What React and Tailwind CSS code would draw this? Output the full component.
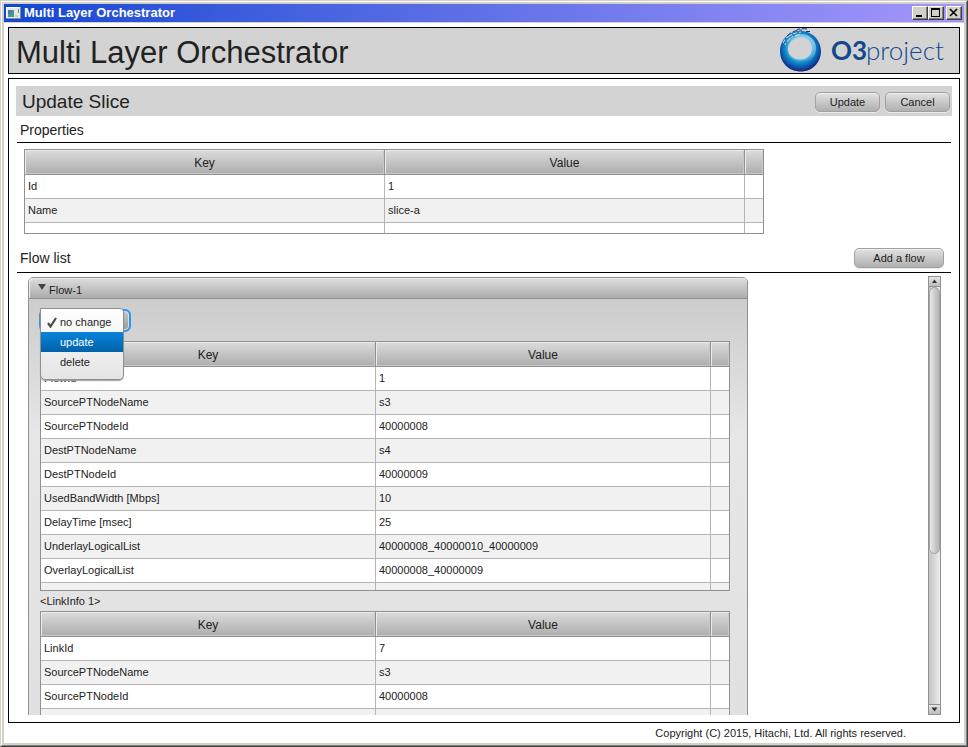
import React from "react";

const properties = [
  ["Id", "1"],
  ["Name", "slice-a"],
];

const flowRows = [
  ["FlowId", "1"],
  ["SourcePTNodeName", "s3"],
  ["SourcePTNodeId", "40000008"],
  ["DestPTNodeName", "s4"],
  ["DestPTNodeId", "40000009"],
  ["UsedBandWidth [Mbps]", "10"],
  ["DelayTime [msec]", "25"],
  ["UnderlayLogicalList", "40000008_40000010_40000009"],
  ["OverlayLogicalList", "40000008_40000009"],
];

const linkRows = [
  ["LinkId", "7"],
  ["SourcePTNodeName", "s3"],
  ["SourcePTNodeId", "40000008"],
];

const headCell =
  "h-[25px] border-b border-[#919191] bg-linear-to-b from-[#dcdcdc] to-[#adadad] px-0 pt-[2px] pb-0 text-center text-xs font-normal shadow-[inset_1px_1px_0_#ececec,inset_-1px_-1px_0_#c8c8c8]";

const bodyCell = "h-6 border-b border-[#b5b5b5] px-[3px] pt-0 pb-[2px]";

function KeyValueTable({ label, rows, fillerClass }) {
  return (
    <div className="border border-[#919191]">
      <table
        aria-label={label}
        className="w-full table-fixed border-separate border-spacing-0 text-[11px] leading-4"
      >
        <colgroup>
          <col />
          <col />
          <col className="w-[18px]" />
        </colgroup>
        <thead>
          <tr>
            <th className={headCell + " border-r"}>Key</th>
            <th className={headCell + " border-r"}>Value</th>
            <th className={headCell} aria-hidden="true"></th>
          </tr>
        </thead>
        <tbody>
          {rows.map(([key, value]) => (
            <tr key={key} className="bg-white even:bg-[#f1f1f1]">
              <td className={bodyCell + " border-r"}>{key}</td>
              <td className={bodyCell + " border-r"}>{value}</td>
              <td className={bodyCell}></td>
            </tr>
          ))}
          <tr className="bg-white even:bg-[#f1f1f1]" aria-hidden="true">
            <td className={fillerClass + " border-r border-[#b5b5b5] p-0"}></td>
            <td className={fillerClass + " border-r border-[#b5b5b5] p-0"}></td>
            <td className={fillerClass + " p-0"}></td>
          </tr>
        </tbody>
      </table>
    </div>
  );
}

function PushButton({ children, className }) {
  return (
    <button
      type="button"
      className={
        "h-5 rounded-[5px] border border-[#a0a0a0] bg-linear-to-b from-[#e2e2e2] to-[#b0b0b0] text-[11px] leading-4 shadow-[inset_0_1px_0_#f0f0f0,0_1px_0_#ececec] " +
        className
      }
    >
      {children}
    </button>
  );
}

function WindowButton({ label, children }) {
  return (
    <button
      type="button"
      aria-label={label}
      className="flex h-[14px] w-4 items-center justify-center border border-t-white border-r-[#404040] border-b-[#404040] border-l-white bg-[#d4d0c8] shadow-[inset_-1px_-1px_0_#808080]"
    >
      <svg width="12" height="10" viewBox="0 0 12 10" fill="none" stroke="#000" shapeRendering="crispEdges">
        {children}
      </svg>
    </button>
  );
}

function TitleBar() {
  return (
    <div className="flex h-[18px] shrink-0 items-center bg-linear-to-r from-[#0f46d2] to-[#a596fa] pr-[2px] pl-[2px]">
      <svg width="16" height="16" viewBox="0 0 16 16" shapeRendering="crispEdges">
        <rect x="0" y="2" width="15" height="12" fill="#e8e8e8" />
        <path d="M0 2.500H15M0.500 2V14" stroke="#fff" />
        <path d="M0 13.500H15M14.500 2V14" stroke="#8a8a8a" />
        <rect x="2" y="5" width="6" height="7" fill="#4c9a8a" />
        <rect x="2" y="5" width="4" height="4" fill="#4a7db0" />
        <rect x="9" y="10" width="3" height="2" fill="#c4ccd0" />
        <rect x="12" y="4" width="1" height="4" fill="#3cae6e" />
      </svg>
      <span className="ml-[2px] flex-1 text-[13px] leading-4 font-bold text-white">
        Multi Layer Orchestrator
      </span>
      <div className="flex">
        <WindowButton label="Minimize">
          <path d="M2 8H8" strokeWidth="2" />
        </WindowButton>
        <WindowButton label="Maximize">
          <path d="M1 1H10" strokeWidth="2" />
          <path d="M1.500 1V8.500H9.500V1" />
        </WindowButton>
        <span className="w-[2px]" />
        <WindowButton label="Close">
          <path d="M2 1L9 8M9 1L2 8" strokeWidth="1.600" shapeRendering="auto" />
        </WindowButton>
      </div>
    </div>
  );
}

function Logo() {
  return (
    <svg width="172" height="45" viewBox="0 0 172 45" role="img" aria-label="O3 project">
      <defs>
        <radialGradient id="ring" gradientUnits="userSpaceOnUse" cx="22" cy="20" r="24">
          <stop offset="0.450" stopColor="#5cc8ec" />
          <stop offset="0.600" stopColor="#1590cc" />
          <stop offset="0.780" stopColor="#0b5cae" />
          <stop offset="0.980" stopColor="#14227c" />
        </radialGradient>
        <linearGradient id="gloss" x1="0" y1="1" x2="1" y2="0">
          <stop offset="0.350" stopColor="#9fdcf4" stopOpacity="0" />
          <stop offset="1" stopColor="#b4d8f8" stopOpacity="0.950" />
        </linearGradient>
      </defs>
      <path
        fillRule="evenodd"
        fill="url(#ring)"
        d="M22 3C33 2.500 43 11.500 43 23C43 35 34 43.500 23 43.500C11 43.500 2 35 2 23C2 13 10 3 22 3ZM23 9C15 10 10 15 10 21C10 27 15 31.500 22 31.500C29 31.500 34 27 34 20C34 14 29 9 23 9Z"
      />
      <path
        fillRule="evenodd"
        fill="url(#gloss)"
        d="M23 6C31 6 38 12 38 20C38 29 31 35 22 35C14 35 8 29 8 22C8 15 14 8 23 6ZM23 9C15 10 10 15 10 21C10 27 15 31.500 22 31.500C29 31.500 34 27 34 20C34 14 29 9 23 9Z"
      />
      <g fill="none" stroke="#d3d3d3" strokeWidth="1.100">
        <path d="M5 15C8 9 13 5 23 4" strokeDasharray="4 2 7 1" />
        <path d="M7 17C10 11 15 7 23 6.500" strokeDasharray="2 2 5 1" />
      </g>
      <g fill="none" stroke="#14307f" strokeWidth="1">
        <path d="M9 8C13 4 18 2 24 2" strokeDasharray="5 2" />
        <path d="M19 1.500C22 0.500 26 0.500 29 1" strokeDasharray="3 2 6 1" />
        <path d="M28 3.500H34" strokeDasharray="4 2" />
      </g>
      <text x="53" y="32" fill="#12498a" fontFamily="Lato, sans-serif" fontSize="26" fontWeight="700">
        O3
      </text>
      <text x="88" y="32" fill="#12498a" fontFamily="Lato, sans-serif" fontSize="26" fontWeight="300">
        project
      </text>
    </svg>
  );
}

function ActionSelect() {
  return (
    <div className="relative mt-[10px] -ml-px w-[92px]">
      <select
        aria-label="Flow action"
        defaultValue="no change"
        className="block h-[23px] w-full appearance-none rounded-[6px] border-2 border-[#2a96f2] bg-linear-to-b from-[#c8c8c8] to-[#9a9a9a] pl-5 text-[11px] shadow-[inset_0_0_0_1px_#dedede] outline-none"
      >
        <option>no change</option>
        <option>update</option>
        <option>delete</option>
      </select>
      <ul
        role="listbox"
        aria-label="Flow action choices"
        className="absolute -top-px left-px z-10 w-[84px] rounded-tr-[4px] rounded-b-[5px] border border-[#8f8f8f] bg-linear-to-b from-white to-[#e4e4e4] pt-[3px] pb-[7px] text-[11px] leading-5 shadow-[0_1px_1px_#a0a0a0]"
      >
        <li role="option" aria-selected="true" className="flex h-5 items-center pl-[5px]">
          <svg width="14" height="12" viewBox="0 0 14 12" fill="none" stroke="#4a4a4a">
            <path d="M2 7L4.500 10.500L10 2" strokeWidth="2.200" />
          </svg>
          no change
        </li>
        <li
          role="option"
          aria-selected="false"
          className="h-5 bg-linear-to-b from-[#0a84dc] to-[#0061a8] pl-[19px] text-white"
        >
          update
        </li>
        <li role="option" aria-selected="false" className="h-5 pl-[19px]">
          delete
        </li>
      </ul>
    </div>
  );
}

function ScrollBar() {
  const arrow = "flex h-[10px] shrink-0 items-center justify-center bg-linear-to-b from-[#e6e6e6] to-[#bdbdbd]";
  return (
    <div className="flex w-[13px] flex-col border border-[#919191] bg-linear-to-r from-[#c4c4c4] to-[#ececec]">
      <button type="button" aria-label="Scroll up" className={arrow + " border-b border-[#919191]"}>
        <svg width="7" height="5" viewBox="0 0 7 5">
          <path d="M3.500 0.500L6 4H1Z" fill="#333" />
        </svg>
      </button>
      <div className="min-h-0 flex-1">
        <div className="h-[64%] rounded-full border border-[#a4a4a4] bg-linear-to-r from-[#e8e8e8] to-[#b4b4b4]" />
      </div>
      <button type="button" aria-label="Scroll down" className={arrow + " border-t border-[#919191]"}>
        <svg width="7" height="5" viewBox="0 0 7 5">
          <path d="M0.500 0.500H6.500L3.500 4.500Z" fill="#333" />
        </svg>
      </button>
    </div>
  );
}

function FlowPane() {
  return (
    <section className="mt-px w-[720px] rounded-t-[5px] border border-[#919191] bg-[#e2e2e2]">
      <h3>
        <button
          type="button"
          aria-expanded="true"
          className="flex h-[21px] w-full items-center rounded-t-[4px] border-b border-[#919191] bg-linear-to-b from-[#dedede] to-[#acacac] pl-2 text-left text-[11px] leading-4 shadow-[inset_1px_1px_0_#ececec]"
        >
          <svg width="12" height="10" viewBox="0 0 12 10">
            <path d="M1 1H9L5 7Z" fill="#444" />
          </svg>
          <span className="pt-[3px]">Flow-1</span>
        </button>
      </h3>
      <div className="flow-root bg-linear-to-b from-[#cccccc] via-[#e7e7e7] via-30% to-[#e0e0e0] pr-[17px] pb-4 pl-[11px]">
        <ActionSelect />
        <div className="mt-[9px]">
          <KeyValueTable label="Flow-1" rows={flowRows} fillerClass="h-[7px]" />
        </div>
        <h4 className="h-5 text-[11px] leading-5">&lt;LinkInfo 1&gt;</h4>
        <KeyValueTable label="LinkInfo 1" rows={linkRows} fillerClass="h-6" />
      </div>
    </section>
  );
}

export default function App() {
  return (
    <div className="h-screen border border-t-[#d4d0c8] border-r-[#404040] border-b-[#404040] border-l-[#d4d0c8] font-['Liberation_Sans',Arial,sans-serif] text-[#222222]">
      <div className="h-full border border-t-white border-r-[#808080] border-b-[#808080] border-l-white">
        <div className="flex h-full flex-col bg-[#d4d0c8] p-[2px]">
          <TitleBar />
          <div className="mt-px flex min-h-0 flex-1 flex-col bg-white px-1 pt-1">
            <header className="flex h-[47px] shrink-0 items-center justify-between border border-black bg-[#d3d3d3] pr-[9px] pl-[7px]">
              <h1 className="pt-1 text-[31px] leading-9">Multi Layer Orchestrator</h1>
              <Logo />
            </header>

            <main className="mt-1 flex min-h-0 flex-1 flex-col border border-black p-[7px]">
              <div className="flex h-[30px] shrink-0 items-center bg-[#d3d3d3] pr-[2px] pl-[6px]">
                <h2 className="flex-1 pt-[2px] text-[19px] leading-6">Update Slice</h2>
                <div className="flex gap-[5px] pt-[2px]">
                  <PushButton className="w-[65px]">Update</PushButton>
                  <PushButton className="w-[65px]">Cancel</PushButton>
                </div>
              </div>

              <div className="mx-px flex h-[27px] shrink-0 items-center border-b border-black pt-[2px] pl-[3px]">
                <h3 className="text-sm leading-5">Properties</h3>
              </div>
              <div className="mt-[6px] ml-2 w-[740px] shrink-0">
                <KeyValueTable label="Properties" rows={properties} fillerClass="h-[10px]" />
              </div>

              <div className="mx-px mt-[9px] flex h-[30px] shrink-0 items-center justify-between border-b border-black pr-[7px] pl-[3px]">
                <h3 className="text-sm leading-5">Flow list</h3>
                <PushButton className="w-[90px]">Add a flow</PushButton>
              </div>
              <div className="mt-[3px] flex min-h-0 flex-1 justify-between pr-[11px] pl-3">
                <div className="overflow-hidden">
                  <FlowPane />
                </div>
                <ScrollBar />
              </div>
            </main>

            <footer className="h-5 shrink-0 pr-[54px] text-right text-[11px] leading-5">
              Copyright (C) 2015, Hitachi, Ltd. All rights reserved.
            </footer>
          </div>
        </div>
      </div>
    </div>
  );
}
